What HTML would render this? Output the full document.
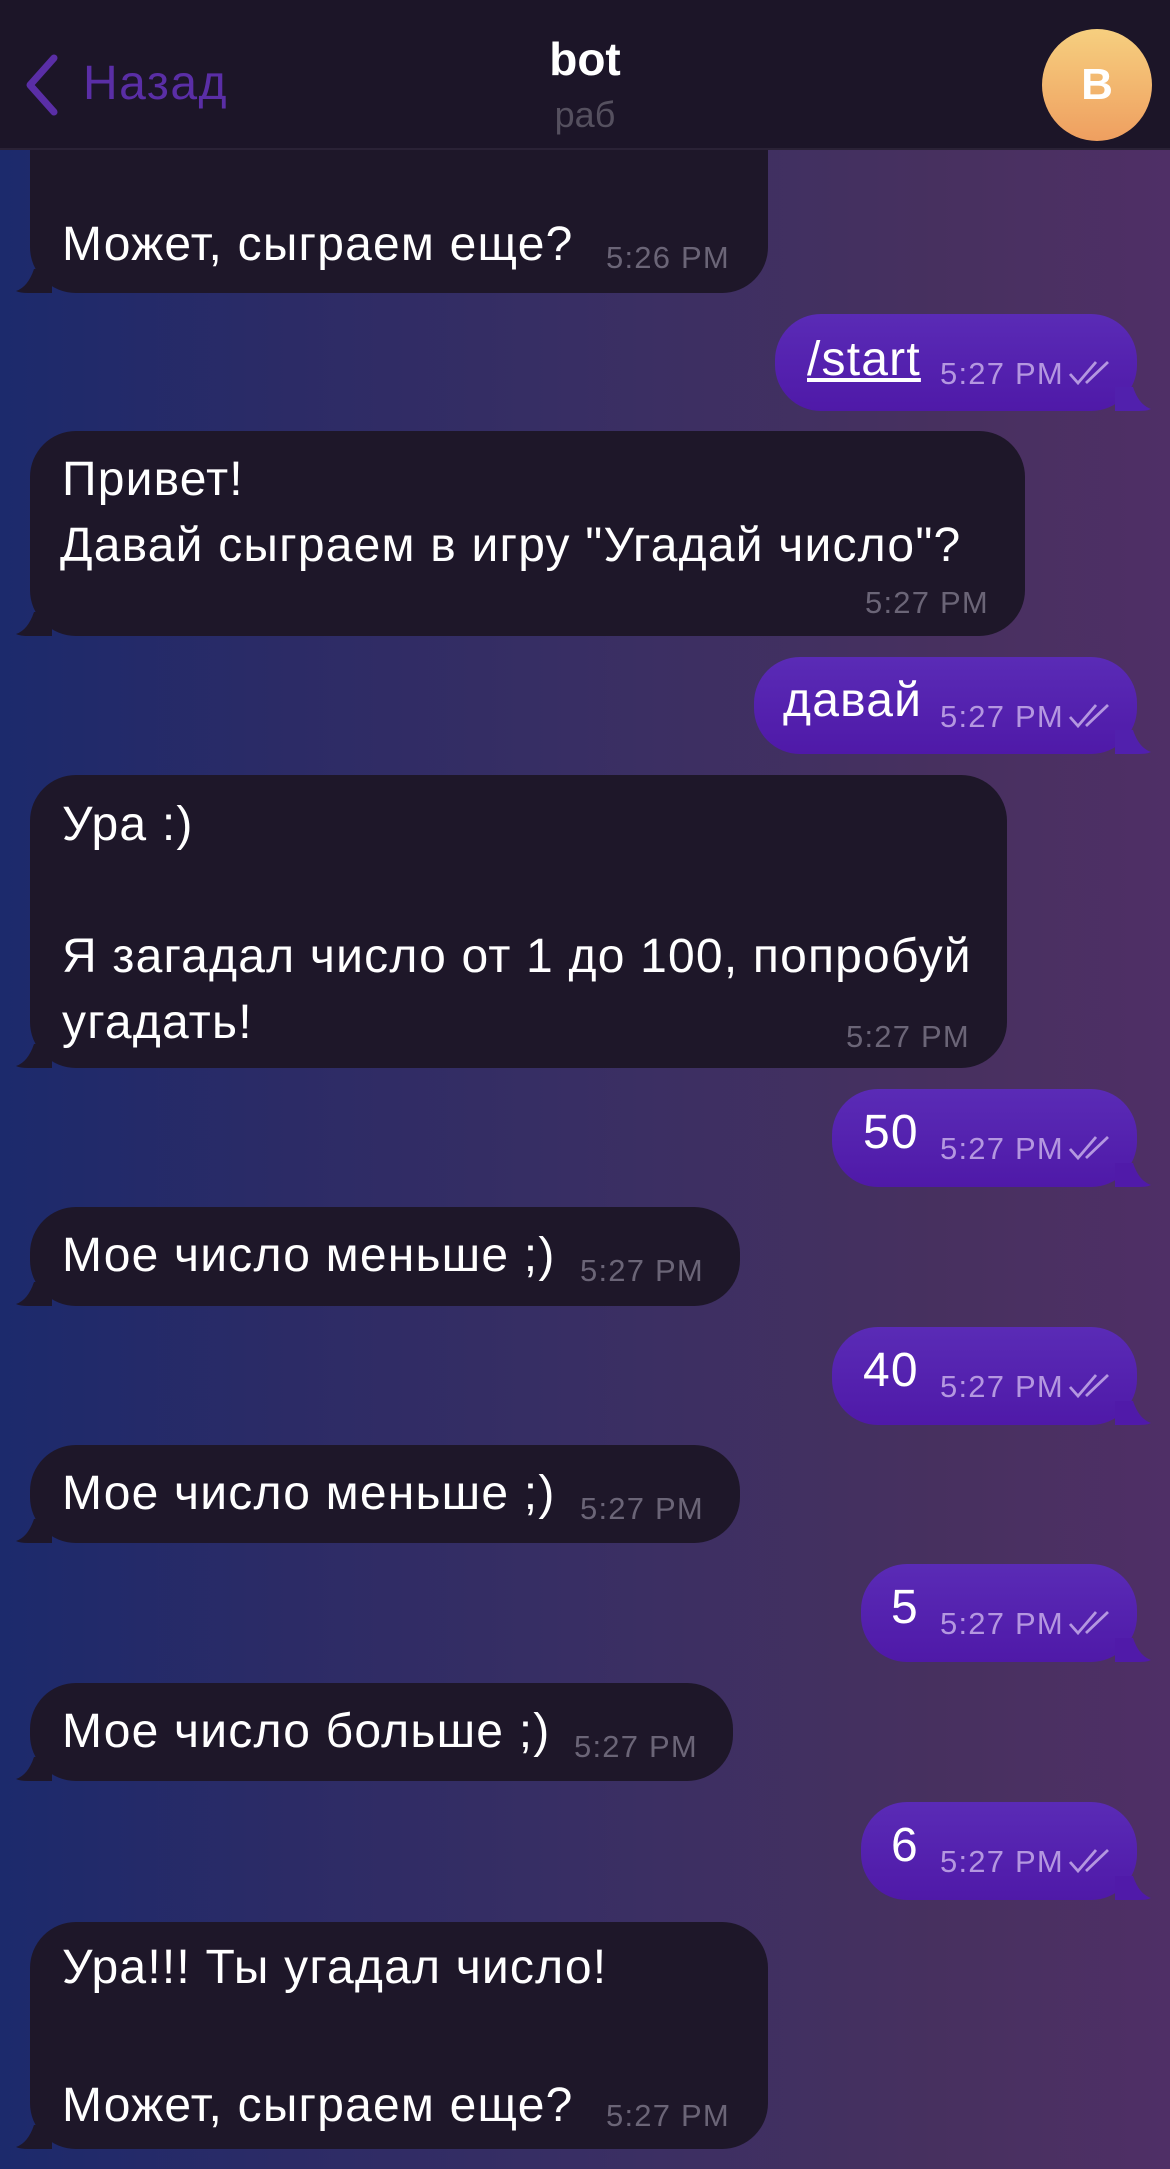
<!DOCTYPE html>
<html><head><meta charset="utf-8"><style>
*{margin:0;padding:0;box-sizing:border-box}
body{width:1170px;height:2169px;overflow:hidden;position:relative;font-family:"Liberation Sans","DejaVu Sans",sans-serif;background:linear-gradient(90deg,#1c2a6c 0%,#2c2b66 25%,#3b2f63 55%,#47305f 80%,#4f2f66 100%)}
.hdr{position:absolute;left:0;top:0;width:1170px;height:150px;background:#1c1528;border-bottom:2px solid #2a2236}
.b{position:absolute;border-radius:46px}
.in{background:#1e1729}
.out{background:linear-gradient(180deg,#5a2bb6,#4f19a8)}
.t{position:absolute;color:#fff;font-size:48px;letter-spacing:1.2px;line-height:66px;white-space:nowrap}
.tm{position:absolute;font-size:31px;letter-spacing:1.2px;line-height:40px;white-space:nowrap}
.in .tm{color:#6b6577}
.out .tm{color:#b497e0}
.ck{position:absolute;top:44px}
</style></head><body>

<div class="b in" style="left:30px;top:140px;width:738px;height:153px;border-top-left-radius:0;border-top-right-radius:0">
<div class="t" style="left:32px;top:72px">Может, сыграем еще?</div>
<div class="tm" style="left:576px;top:98px">5:26 PM</div>
</div>

<div class="b out" style="left:775px;top:314px;width:362px;height:97px">
<div class="t" style="left:32px;top:13px;text-decoration:underline">/start</div>
<div class="tm" style="left:165px;top:40px">5:27 PM</div>
<svg class="ck" style="left:293px" width="50" height="30"><path d="M2 16 L10 25 L28 4 M18 25 L40 4" stroke="#b497e0" stroke-width="2.8" fill="none"/></svg>
</div>

<div class="b in" style="left:30px;top:431px;width:995px;height:205px">
<div class="t" style="left:32px;top:16px">Привет!</div>
<div class="t" style="left:30px;top:82px">Давай сыграем в игру "Угадай число"?</div>
<div class="tm" style="left:835px;top:152px">5:27 PM</div>
</div>

<div class="b out" style="left:754px;top:657px;width:383px;height:97px">
<div class="t" style="left:29px;top:11px">давай</div>
<div class="tm" style="left:186px;top:40px">5:27 PM</div>
<svg class="ck" style="left:314px" width="50" height="30"><path d="M2 16 L10 25 L28 4 M18 25 L40 4" stroke="#b497e0" stroke-width="2.8" fill="none"/></svg>
</div>

<div class="b in" style="left:30px;top:775px;width:977px;height:293px">
<div class="t" style="left:32px;top:17px">Ура :)</div>
<div class="t" style="left:32px;top:149px">Я загадал число от 1 до 100, попробуй</div>
<div class="t" style="left:32px;top:215px">угадать!</div>
<div class="tm" style="left:816px;top:242px">5:27 PM</div>
</div>

<div class="b out" style="left:832px;top:1089px;width:305px;height:98px">
<div class="t" style="left:31px;top:11px">50</div>
<div class="tm" style="left:108px;top:40px">5:27 PM</div>
<svg class="ck" style="left:236px" width="50" height="30"><path d="M2 16 L10 25 L28 4 M18 25 L40 4" stroke="#b497e0" stroke-width="2.8" fill="none"/></svg>
</div>

<div class="b in" style="left:30px;top:1207px;width:710px;height:99px">
<div class="t" style="left:32px;top:16px">Мое число меньше ;)</div>
<div class="tm" style="left:550px;top:44px">5:27 PM</div>
</div>

<div class="b out" style="left:832px;top:1327px;width:305px;height:98px">
<div class="t" style="left:31px;top:11px">40</div>
<div class="tm" style="left:108px;top:40px">5:27 PM</div>
<svg class="ck" style="left:236px" width="50" height="30"><path d="M2 16 L10 25 L28 4 M18 25 L40 4" stroke="#b497e0" stroke-width="2.8" fill="none"/></svg>
</div>

<div class="b in" style="left:30px;top:1445px;width:710px;height:98px">
<div class="t" style="left:32px;top:16px">Мое число меньше ;)</div>
<div class="tm" style="left:550px;top:44px">5:27 PM</div>
</div>

<div class="b out" style="left:861px;top:1564px;width:276px;height:98px">
<div class="t" style="left:30px;top:11px">5</div>
<div class="tm" style="left:79px;top:40px">5:27 PM</div>
<svg class="ck" style="left:207px" width="50" height="30"><path d="M2 16 L10 25 L28 4 M18 25 L40 4" stroke="#b497e0" stroke-width="2.8" fill="none"/></svg>
</div>

<div class="b in" style="left:30px;top:1683px;width:703px;height:98px">
<div class="t" style="left:32px;top:16px">Мое число больше ;)</div>
<div class="tm" style="left:544px;top:44px">5:27 PM</div>
</div>

<div class="b out" style="left:861px;top:1802px;width:276px;height:98px">
<div class="t" style="left:30px;top:11px">6</div>
<div class="tm" style="left:79px;top:40px">5:27 PM</div>
<svg class="ck" style="left:207px" width="50" height="30"><path d="M2 16 L10 25 L28 4 M18 25 L40 4" stroke="#b497e0" stroke-width="2.8" fill="none"/></svg>
</div>

<div class="b in" style="left:30px;top:1922px;width:738px;height:227px">
<div class="t" style="left:32px;top:13px">Ура!!! Ты угадал число!</div>
<div class="t" style="left:32px;top:151px">Может, сыграем еще?</div>
<div class="tm" style="left:576px;top:174px">5:27 PM</div>
</div>

<svg style="position:absolute;left:16px;top:269px" width="36" height="24"><path d="M36 0 L36 24 L12 24 Q4 24 0 22 Q12 18 18 0 Z" fill="#1e1729"/></svg>
<svg style="position:absolute;left:16px;top:612px" width="36" height="24"><path d="M36 0 L36 24 L12 24 Q4 24 0 22 Q12 18 18 0 Z" fill="#1e1729"/></svg>
<svg style="position:absolute;left:16px;top:1044px" width="36" height="24"><path d="M36 0 L36 24 L12 24 Q4 24 0 22 Q12 18 18 0 Z" fill="#1e1729"/></svg>
<svg style="position:absolute;left:16px;top:1282px" width="36" height="24"><path d="M36 0 L36 24 L12 24 Q4 24 0 22 Q12 18 18 0 Z" fill="#1e1729"/></svg>
<svg style="position:absolute;left:16px;top:1519px" width="36" height="24"><path d="M36 0 L36 24 L12 24 Q4 24 0 22 Q12 18 18 0 Z" fill="#1e1729"/></svg>
<svg style="position:absolute;left:16px;top:1757px" width="36" height="24"><path d="M36 0 L36 24 L12 24 Q4 24 0 22 Q12 18 18 0 Z" fill="#1e1729"/></svg>
<svg style="position:absolute;left:16px;top:2125px" width="36" height="24"><path d="M36 0 L36 24 L12 24 Q4 24 0 22 Q12 18 18 0 Z" fill="#1e1729"/></svg>

<svg style="position:absolute;left:1115px;top:387px" width="36" height="24"><path d="M0 0 L0 24 L24 24 Q32 24 36 22 Q24 18 18 0 Z" fill="#5120ad"/></svg>
<svg style="position:absolute;left:1115px;top:730px" width="36" height="24"><path d="M0 0 L0 24 L24 24 Q32 24 36 22 Q24 18 18 0 Z" fill="#5120ad"/></svg>
<svg style="position:absolute;left:1115px;top:1163px" width="36" height="24"><path d="M0 0 L0 24 L24 24 Q32 24 36 22 Q24 18 18 0 Z" fill="#501aa9"/></svg>
<svg style="position:absolute;left:1115px;top:1401px" width="36" height="24"><path d="M0 0 L0 24 L24 24 Q32 24 36 22 Q24 18 18 0 Z" fill="#501aa9"/></svg>
<svg style="position:absolute;left:1115px;top:1638px" width="36" height="24"><path d="M0 0 L0 24 L24 24 Q32 24 36 22 Q24 18 18 0 Z" fill="#501aa9"/></svg>
<svg style="position:absolute;left:1115px;top:1876px" width="36" height="24"><path d="M0 0 L0 24 L24 24 Q32 24 36 22 Q24 18 18 0 Z" fill="#501aa9"/></svg>

<div class="hdr" style="z-index:5">
<svg style="position:absolute;left:22px;top:54px" width="40" height="62" viewBox="0 0 40 62"><path d="M32 4 L8 31 L32 58" stroke="#5a2ea6" stroke-width="7" fill="none" stroke-linecap="round" stroke-linejoin="round"/></svg>
<div style="position:absolute;left:83px;top:56px;font-size:48px;letter-spacing:1.5px;color:#5a2ea6">Назад</div>
<div style="position:absolute;left:0;width:1170px;top:32px;text-align:center;font-size:46px;font-weight:bold;color:#fff">bot</div>
<div style="position:absolute;left:0;width:1170px;top:94px;text-align:center;font-size:36px;color:#55505f">раб</div>
<div style="position:absolute;left:1042px;top:29px;width:110px;height:112px;border-radius:50%;background:linear-gradient(180deg,#f6cf7f,#ef9f60);color:#fff;font-weight:bold;font-size:44px;text-align:center;line-height:112px">B</div>
</div>
</body></html>
